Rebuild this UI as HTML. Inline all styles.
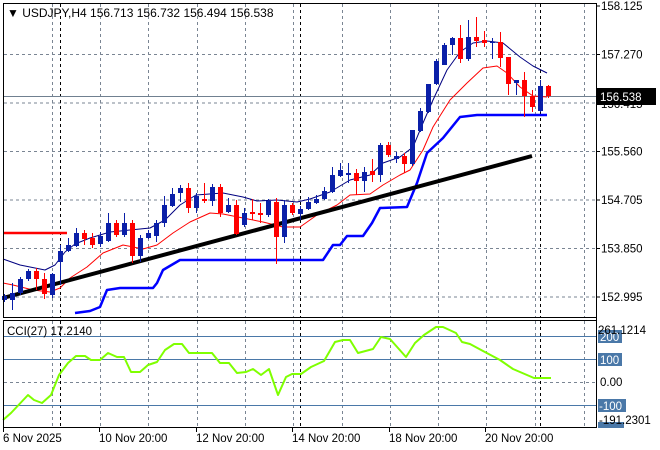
<!DOCTYPE html>
<html><head><meta charset="utf-8">
<style>
html,body{margin:0;padding:0;background:#fff;width:660px;height:450px;overflow:hidden}
svg{display:block;font-family:"Liberation Sans",Tahoma,sans-serif}
</style></head><body>
<svg id="s" width="660" height="450" viewBox="0 0 660 450" xmlns="http://www.w3.org/2000/svg">
<rect width="660" height="450" fill="#fff"/>
<g id="grid" stroke="#7a8593" stroke-width="1" stroke-dasharray="3,3" fill="none"></g>
<g id="ind"></g>
<g id="candles"></g>
<g id="frame" fill="none" stroke="#000" stroke-width="1">
<line x1="3.5" y1="3" x2="3.5" y2="318"/>
<line x1="3" y1="3.5" x2="597" y2="3.5"/>
<line x1="596.5" y1="3" x2="596.5" y2="428"/>
<line x1="3" y1="317.5" x2="597" y2="317.5"/>
<line x1="3.5" y1="320" x2="3.5" y2="428"/>
<line x1="3" y1="320.5" x2="597" y2="320.5"/>
<line x1="3" y1="427.5" x2="597" y2="427.5"/>
</g>
<g id="labels" font-size="11.5" fill="#000"></g>
<text x="7" y="17" font-size="12" fill="#000">▼ USDJPY,H4  156.713 156.732 156.494 156.538</text>
<text x="7" y="335" font-size="11.5" fill="#000">CCI(27) 17.2140</text>
</svg>
<script>
const NS="http://www.w3.org/2000/svg";
function el(p,t,a,txt){const e=document.createElementNS(NS,t);for(const k in a)e.setAttribute(k,a[k]);if(txt!==undefined)e.textContent=txt;document.getElementById(p).appendChild(e);return e;}
// grid
const vx=[52,100,148,197,245,293,342,390,438,486,535,584];
vx.forEach(x=>{el('grid','line',{x1:x+.5,y1:4,x2:x+.5,y2:317});el('grid','line',{x1:x+.5,y1:321,x2:x+.5,y2:427});});
[54.5,103,151.5,200,248.5,297].forEach(y=>el('grid','line',{x1:4,y1:y,x2:596,y2:y}));
el('grid','line',{x1:4,y1:382.5,x2:596,y2:382.5});
[60,300,540].forEach(x=>{el('grid','line',{x1:x+.5,y1:4,x2:x+.5,y2:317,stroke:'#000'});el('grid','line',{x1:x+.5,y1:321,x2:x+.5,y2:427,stroke:'#000'});});
// CCI levels
[336.5,359.5,405.5].forEach(y=>el('ind','line',{x1:4,y1:y,x2:596,y2:y,stroke:'#4a78a8','stroke-width':1}));
// price line
el('ind','line',{x1:4,y1:96.5,x2:596,y2:96.5,stroke:'#708090','stroke-width':1});
// red horizontal
el('ind','line',{x1:4,y1:233,x2:67,y2:233,stroke:'#f00','stroke-width':2.5});
function pl(pts,c,w){el('ind','polyline',{points:pts.map(p=>p.join(',')).join(' '),fill:'none',stroke:c,'stroke-width':w,'stroke-linejoin':'round'});}
pl([[75,313],[90,311],[100,307],[107,290],[120,288],[153,288],[157,283],[163,270],[180,260],[323,260],[333,245],[340,245],[347,236],[363,236],[372,223],[380,208],[407,207],[417,183],[427,153],[443,138],[460,117],[477,115],[547,115]],'#0000ff',2.5);
pl([[3,283],[13,285],[33,290],[50,292],[60,288],[70,278],[87,267],[103,253],[123,245],[143,249],[157,245],[173,233],[190,222],[210,213],[223,214],[243,218],[263,222],[283,227],[300,227],[317,215],[337,205],[350,195],[370,194],[383,185],[400,175],[410,170],[423,150],[433,127],[450,100],[467,83],[483,68],[497,66],[507,73],[520,87],[533,96],[547,97]],'#f00',1);
pl([[3,259],[20,265],[35,268],[45,270],[55,265],[65,252],[75,244],[90,238],[110,232],[130,230],[150,228],[165,220],[180,205],[196,195],[223,193],[243,197],[257,201],[277,200],[297,202],[310,199],[330,192],[350,180],[370,175],[383,163],[400,157],[413,147],[423,123],[433,100],[447,70],[460,52],[473,43],[487,41],[503,43],[520,57],[533,66],[547,73]],'#000080',1);
el('ind','line',{x1:3,y1:298,x2:532,y2:156,stroke:'#000','stroke-width':4});
// CCI
const cx=[3,11,28,34,42,51,59,68,76,85,91,100,108,117,124,131,140,148,157,165,174,182,189,199,212,220,229,237,246,253,261,269,278,286,292,301,311,324,335,343,350,358,373,381,390,406,415,424,436,443,456,462,470,483,500,513,534,551];
const cy=[420,413,395,400,403,395,375,363,356,356,360,360,353,357,357,372,372,365,362,350,344,344,353,353,353,363,363,373,372,369,375,369,395,377,374,374,367,361,342,340,340,353,349,337,339,357,343,335,327,327,333,342,344,351,360,369,378,378];
pl(cx.map((x,i)=>[x,cy[i]]),'#7fff00',2);
// candles [color, bodyTop, bodyBot, wickTop, wickBot]
const C=[['b',296,300,294,302],['b',293,300,283,310],['b',279,293,277,295],['b',271,279,269,281],['r',271,279,268,290],['r',279,294,273,299],['b',274,295,273,298],['b',251,262,245,285],['b',245,251,238,252],['b',233,246,228,247],['r',233,239,230,245],['r',238,245,233,248],['b',236,244,232,247],['b',223,241,213,242],['r',223,235,220,237],['b',223,235,213,237],['r',223,256,220,263],['b',238,256,235,262],['b',233,238,230,239],['b',223,236,220,242],['b',205,223,196,227],['b',194,206,188,207],['b',188,193,185,202],['r',188,208,183,213],['b',196,208,193,213],
['r',199,201,183,203],['b',187,201,184,206],['r',187,213,184,217],['b',205,212,198,213],['r',205,234,200,235],['b',213,225,208,227],['r',212,214,199,220],['r',213,215,203,223],['b',201,215,199,217],['r',202,237,198,264],['b',205,237,200,243],['r',205,213,203,215],['b',209,214,206,220],['b',202,209,197,210],['b',199,203,195,204],['b',191,199,187,200],['b',175,192,167,193],['b',170,176,163,177],['b',173,175,163,183],['r',173,181,169,195],['b',172,181,167,192],['r',171,175,159,182],['b',145,175,143,182],['r',145,155,142,157],['b',156,159,152,163],
['r',156,164,153,173],['b',130,164,130,166],['b',111,131,108,132],['b',84,112,84,113],['b',61,84,59,85],['b',45,65,43,65],['b',38,45,37,55],['r',38,59,25,63],['b',37,59,20,61],['r',37,41,17,47],['r',40,43,31,47],['b',42,43,38,59],['r',42,58,32,67],['r',57,84,57,95],['b',80,83,80,95],['r',80,96,72,117],['r',96,107,90,112],['b',86,111,80,112],['r',86,96,85,98]];
C.forEach((c,i)=>{const x=4+8*i;const col=c[0]=='b'?'#0a1fa8':'#f00';
el('candles','line',{x1:x+.5,y1:c[3],x2:x+.5,y2:c[4],stroke:col,'stroke-width':1});
el('candles','rect',{x:x-2,y:c[1],width:5,height:Math.max(1,c[2]-c[1]),fill:col});});
// right axis
const pr=[['158.125',6],['157.270',54.5],['155.560',151.5],['154.705',200],['153.850',248.5],['152.995',297]];
pr.forEach(p=>{el('labels','line',{x1:596,y1:p[1],x2:600,y2:p[1],stroke:'#000'});el('labels','text',{x:601,y:p[1]+4},p[0]);});
el('labels','text',{x:601,y:108},'156.415');
el('labels','rect',{x:596,y:88,width:60,height:17,fill:'#000'});
el('labels','text',{x:600,y:101,fill:'#fff'},'156.538');
// CCI axis
el('labels','rect',{x:598,y:330,width:24,height:13,fill:'#4a78a8'});
el('labels','text',{x:600,y:341,fill:'#fff'},'200');
el('labels','text',{x:598,y:334},'261.1214');
el('labels','rect',{x:598,y:353,width:24,height:13,fill:'#4a78a8'});
el('labels','text',{x:600,y:364,fill:'#fff'},'100');
el('labels','text',{x:600,y:386},'0.00');
el('labels','rect',{x:598,y:399,width:28,height:13,fill:'#4a78a8'});
el('labels','text',{x:599,y:410,fill:'#fff'},'-100');
el('labels','rect',{x:598,y:422,width:26,height:6,fill:'#4a78a8'});
el('labels','text',{x:599,y:424},'-191.2301');
// dates
[['6 Nov 2025',3],['10 Nov 20:00',99],['12 Nov 20:00',196],['14 Nov 20:00',292],['18 Nov 20:00',389],['20 Nov 20:00',485]].forEach(d=>{el('labels','text',{x:d[1],y:442},d[0]);el('labels','line',{x1:d[1]+.5,y1:428,x2:d[1]+.5,y2:432,stroke:'#000'});});
</script>
</body></html>
